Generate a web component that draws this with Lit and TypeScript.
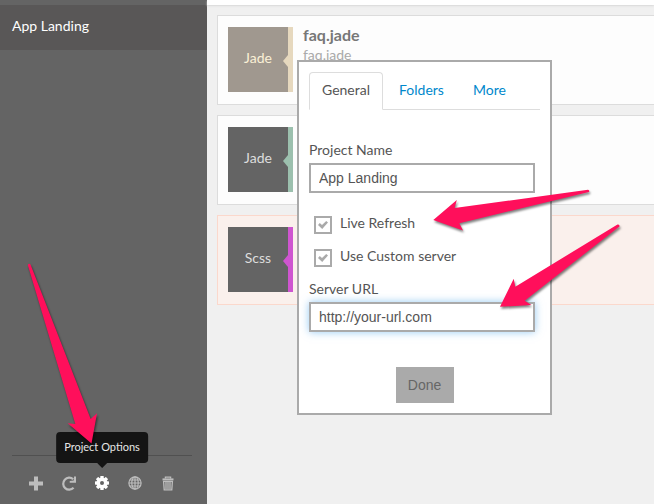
import { LitElement, html, css, svg } from "lit";
import { customElement, property, state } from "lit/decorators.js";
import { classMap } from "lit/directives/class-map.js";

const gearTeeth = [0, 45, 90, 135, 180, 225, 270, 315];

const icons = {
  plus: svg`<path fill="currentColor" d="M5 0.5h4v5h5v4H9v5H5v-5H0v-4h5z"/>`,
  refresh: svg`<path fill="none" stroke="currentColor" stroke-width="2.2" d="M11.6 11.8A6 6 0 1 1 11.2 3.2"/><path fill="currentColor" d="M14 0.5v6.3H7.7V5L11.8 4.6L12 0.5z"/>`,
  gear: svg`<path fill="currentColor" fill-rule="evenodd" d="M7 1.6a5.4 5.4 0 1 0 0 10.8a5.4 5.4 0 1 0 0-10.8zM7 5a2 2 0 1 1 0 4a2 2 0 1 1 0-4z"/>${gearTeeth.map(
    (a) => svg`<rect fill="currentColor" x="5.3" y="0" width="3.4" height="3" rx="0.6" transform="rotate(${a} 7 7)"/>`
  )}`,
  globe: svg`<g fill="none" stroke="currentColor" stroke-width="1.2"><circle cx="7" cy="7" r="6.1"/><ellipse cx="7" cy="7" rx="3.2" ry="6.1"/><path d="M7 0.9v12.2M0.9 7h12.2M1.9 4h10.2M1.9 10h10.2"/></g>`,
  trash: svg`<g fill="none" stroke="currentColor"><path stroke-width="2" d="M1.5 3.4h11"/><path stroke-width="1.3" d="M4.4 2.6V1.1h5.2v1.5M2.6 5.4l.6 8.4h7.6l.6-8.4z"/><path stroke-width="1.3" d="M5 6v7M7 6v7M9 6v7"/></g>`,
};

@customElement("file-card")
class FileCard extends LitElement {
  @property() kind = "";
  @property() name = "";
  @property() path = "";
  @property({ reflect: true }) tone = "";

  static styles = css`
    :host {
      display: flex;
      gap: 10px;
      height: 90px;
      box-sizing: border-box;
      padding: 11px 10px;
      border: 1px solid #dcdcdc;
      border-right: 0;
      background: #fdfdfd;
      --strip: #9cc0ae;
      --thumb: #646464;
      --ink: #dddddd;
    }
    :host([tone="sand"]) {
      --strip: #e6d8be;
      --thumb: #a0988f;
      --ink: #fbf0d6;
    }
    :host([tone="alert"]) {
      --strip: #cf55d0;
      background: #faf0ec;
      border-color: #fbd8cc;
    }
    .thumb {
      position: relative;
      display: flex;
      align-items: center;
      justify-content: center;
      width: 60px;
      height: 65px;
      padding-bottom: 3px;
      box-sizing: border-box;
      width: 65px;
      border-right: 5px solid var(--strip);
      background: var(--thumb);
      color: var(--ink);
      flex: none;
    }
    .thumb::after {
      content: "";
      position: absolute;
      right: 0;
      top: 28px;
      border: 6px solid transparent;
      border-left-width: 0;
      border-right: 5px solid var(--strip);
    }
    .info {
      line-height: 20px;
      margin-top: -2px;
    }
    .name {
      font-weight: bold;
      font-size: 16px;
      color: #777777;
    }
    .path {
      color: #aaaaaa;
    }
  `;

  render() {
    return html`<div class="thumb">${this.kind}</div>
      <div class="info">
        <div class="name">${this.name}</div>
        <div class="path">${this.path}</div>
      </div>`;
  }
}

@customElement("app-root")
class AppRoot extends LitElement {
  @state() tab = "General";

  static styles = css`
    :host {
      position: relative;
      display: flex;
      min-height: 100vh;
      overflow: hidden;
      font: 14px/20px Lato, sans-serif;
      color: #555555;
      background: #f0f0f0;
    }
    button,
    input {
      font: inherit;
      box-sizing: border-box;
    }
    .sidebar {
      display: flex;
      flex-direction: column;
      width: 207px;
      flex: none;
      background: #646464;
    }
    .project {
      display: block;
      margin-top: 5px;
      padding: 11px 12px 14px;
      background: #595757;
      color: #ffffff;
      text-decoration: none;
    }
    .tools {
      display: flex;
      justify-content: center;
      gap: 19px;
      margin: auto 15px 0 12px;
      padding: 20px 0 14px;
      border-top: 1px solid #505050;
    }
    .tool {
      position: relative;
      display: flex;
      border: 0;
      padding: 0;
      background: none;
      color: #bdbdbd;
    }
    .tool.active {
      color: #ffffff;
    }
    .icon {
      width: 14px;
      height: 14px;
      overflow: visible;
    }
    .tip {
      position: absolute;
      bottom: 27px;
      left: 50%;
      transform: translateX(-50%);
      padding: 7px 8px 9px;
      border-radius: 4px;
      background: #141414;
      color: #e6e6e6;
      font-size: 11px;
      line-height: 15px;
      white-space: nowrap;
    }
    .tip::after {
      content: "";
      position: absolute;
      top: 100%;
      left: 50%;
      margin-left: -5px;
      border: 5px solid transparent;
      border-top-color: #141414;
      border-bottom: 0;
    }
    .main {
      flex: 1;
      min-width: 0;
    }
    .topbar {
      height: 5px;
      background: #ffffff;
      box-shadow: 0 1px 2px #d8d8d8;
    }
    .cards {
      display: grid;
      gap: 10px;
      padding: 10px 0 10px 10px;
    }
    .dialog {
      position: absolute;
      left: 297px;
      top: 60px;
      width: 255px;
      box-sizing: border-box;
      padding: 10px;
      border: 2px solid #aaaaaa;
      background: #ffffff;
    }
    .tabs {
      display: flex;
      gap: 3px;
      border-bottom: 1px solid #dddddd;
    }
    .tab {
      margin-bottom: -1px;
      padding: 7px 12px 9px;
      border: 1px solid transparent;
      border-radius: 4px 4px 0 0;
      background: none;
      color: #0088cc;
    }
    .tab.active {
      border-color: #dddddd;
      border-bottom-color: #ffffff;
      background: #ffffff;
      color: #555555;
    }
    .form {
      display: flex;
      flex-direction: column;
      padding-top: 30px;
    }
    .field {
      height: 30px;
      margin: 3px 5px 0 0;
      padding: 0 8px;
      border: 2px solid #aaaaaa;
      background: #ffffff;
      color: #555555;
      font-family: "Liberation Sans", sans-serif;
      outline: 0;
    }
    .field.focus {
      box-shadow: 0 0 8px rgba(82, 168, 236, 0.6);
    }
    .checks {
      display: grid;
      gap: 12px;
      padding: 20px 5px 12px;
    }
    .check {
      display: flex;
      align-items: flex-start;
      gap: 8px;
    }
    .box {
      appearance: none;
      display: grid;
      place-items: center;
      width: 18px;
      height: 18px;
      margin: 3px 0 0;
      border: 2px solid #aaaaaa;
      background: #ffffff;
    }
    .box:checked::after {
      content: "";
      width: 10px;
      height: 8px;
      background: #aaaaaa;
      clip-path: polygon(0 50%, 18% 26%, 40% 50%, 82% 0, 100% 20%, 42% 100%);
    }
    .done {
      align-self: center;
      width: 58px;
      height: 36px;
      margin-top: 35px;
      padding: 0;
      border: 0;
      background: #aaaaaa;
      color: #666666;
      font-family: "Liberation Sans", sans-serif;
    }
    .arrows {
      position: absolute;
      left: 0;
      top: 0;
      pointer-events: none;
      filter: drop-shadow(1px 2px 1px rgba(0, 0, 0, 0.5));
    }
  `;

  private tool(icon: keyof typeof icons, label: string, tip = false) {
    return html`<button class=${classMap({ tool: true, active: tip })} aria-label=${label}>
      <svg class="icon" viewBox="0 0 14 14" aria-hidden="true">${icons[icon]}</svg>
      ${tip ? html`<span class="tip" role="tooltip">${label}</span>` : ""}
    </button>`;
  }

  render() {
    return html`
      <nav class="sidebar">
        <a class="project" href="#">App Landing</a>
        <div class="tools">
          ${this.tool("plus", "Add")} ${this.tool("refresh", "Refresh")}
          ${this.tool("gear", "Project Options", true)} ${this.tool("globe", "Browse")}
          ${this.tool("trash", "Delete")}
        </div>
      </nav>
      <main class="main">
        <div class="topbar"></div>
        <div class="cards">
          <file-card kind="Jade" name="faq.jade" path="faq.jade" tone="sand"></file-card>
          <file-card kind="Jade"></file-card>
          <file-card kind="Scss" tone="alert"></file-card>
        </div>
      </main>
      <section class="dialog" role="dialog" aria-label="Project Options">
        <div class="tabs" role="tablist">
          ${["General", "Folders", "More"].map(
            (name) => html`<button
              role="tab"
              class=${classMap({ tab: true, active: name === this.tab })}
              @click=${() => (this.tab = name)}
            >${name}</button>`
          )}
        </div>
        <div class="form">
          <label for="name">Project Name</label>
          <input class="field" id="name" type="text" value="App Landing" />
          <div class="checks">
            <label class="check"><input class="box" type="checkbox" checked />Live Refresh</label>
            <label class="check"><input class="box" type="checkbox" checked />Use Custom server</label>
          </div>
          <label for="url">Server URL</label>
          <input class="field focus" id="url" type="text" value="http://your-url.com" />
          <button class="done">Done</button>
        </div>
      </section>
      <svg class="arrows" width="654" height="504" viewBox="0 0 654 504" fill="#ff0f5b" aria-hidden="true">
        <path d="M91.5 443.5L97 413.3L90.7 419L30.5 264.5Q29 263 27.8 265L75.3 424L67.7 423.3z" />
        <path d="M433.3 220L456.8 200L454.7 208L588 189.8Q590 190.5 589 192L459.3 223.3L463 230.4z" />
        <path d="M500 306.8L513.7 278.7L515.3 286.7L617.5 224.5Q620 224.5 619.5 226.5L524.7 300.7L531.4 305z" />
      </svg>
    `;
  }
}
